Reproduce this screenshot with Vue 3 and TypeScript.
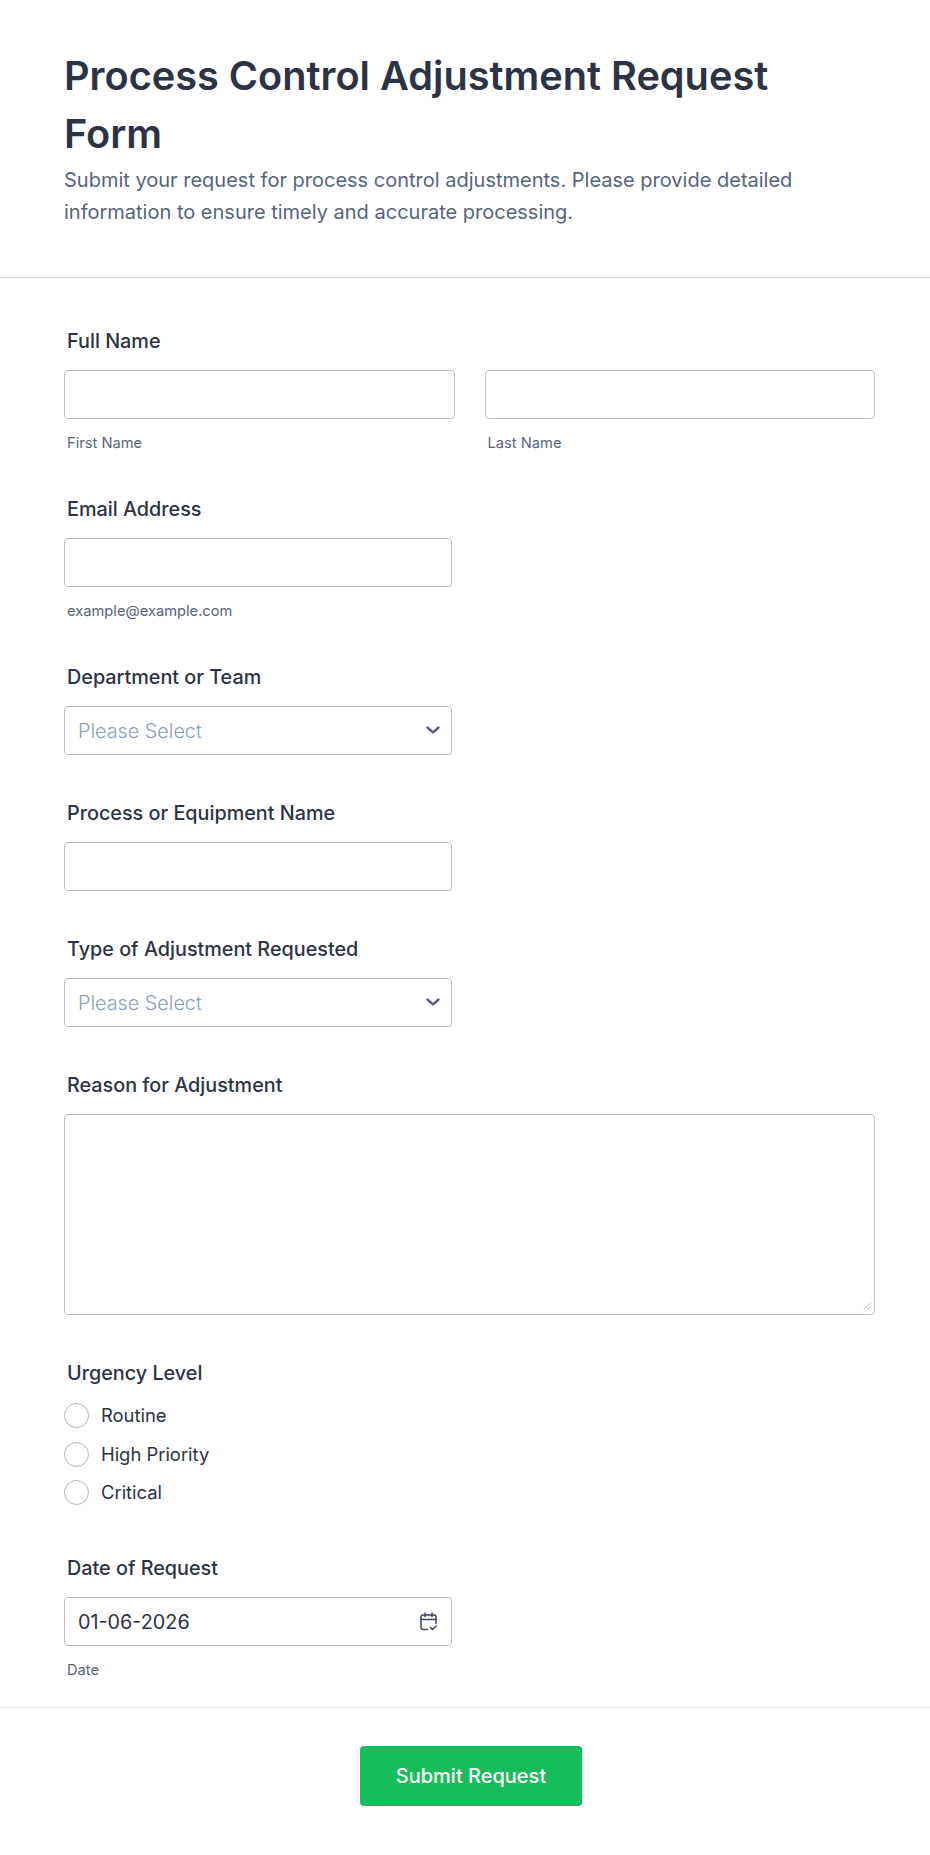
<template>
  <div class="page">
    <header class="form-header">
      <h1>Process Control Adjustment Request Form</h1>
      <p>Submit your request for process control adjustments. Please provide detailed information to ensure timely and accurate processing.</p>
    </header>

    <form class="form-body" @submit.prevent>
      <div class="field">
        <label class="field-label">Full Name</label>
        <div class="name-row">
          <div class="name-col">
            <input v-model="firstName" class="control" type="text" />
            <span class="sublabel">First Name</span>
          </div>
          <div class="name-col">
            <input v-model="lastName" class="control" type="text" />
            <span class="sublabel">Last Name</span>
          </div>
        </div>
      </div>

      <div class="field narrow">
        <label class="field-label">Email Address</label>
        <input v-model="email" class="control" type="email" />
        <span class="sublabel">example@example.com</span>
      </div>

      <div class="field narrow">
        <label class="field-label">Department or Team</label>
        <div class="select-wrap">
          <select v-model="department" class="control select">
            <option value="">Please Select</option>
          </select>
          <svg class="chevron" viewBox="0 0 14 8" fill="none">
            <path d="M1.500 1.500L7 6.300l5.500-4.800" stroke="#556079" stroke-width="2.400" stroke-linecap="round" stroke-linejoin="round" />
          </svg>
        </div>
      </div>

      <div class="field narrow">
        <label class="field-label">Process or Equipment Name</label>
        <input v-model="processName" class="control" type="text" />
      </div>

      <div class="field narrow">
        <label class="field-label">Type of Adjustment Requested</label>
        <div class="select-wrap">
          <select v-model="adjustment" class="control select">
            <option value="">Please Select</option>
          </select>
          <svg class="chevron" viewBox="0 0 14 8" fill="none">
            <path d="M1.500 1.500L7 6.300l5.500-4.800" stroke="#556079" stroke-width="2.400" stroke-linecap="round" stroke-linejoin="round" />
          </svg>
        </div>
      </div>

      <div class="field">
        <label class="field-label">Reason for Adjustment</label>
        <div class="select-wrap">
          <textarea v-model="reason" class="control textarea"></textarea>
          <svg class="grip" viewBox="0 0 8 8" fill="none" stroke="#b4b9c4" stroke-width="1">
            <path d="M1 7.500L7.500 1M4.500 7.500L7.500 4.500" />
          </svg>
        </div>
      </div>

      <div class="field">
        <label class="field-label">Urgency Level</label>
        <div class="radios">
          <label v-for="level in levels" :key="level" class="radio">
            <input v-model="urgency" type="radio" name="urgency" :value="level" />
            <span>{{ level }}</span>
          </label>
        </div>
      </div>

      <div class="field narrow">
        <label class="field-label">Date of Request</label>
        <div class="select-wrap">
          <input v-model="requestDate" class="control date" type="text" />
          <svg class="calendar" viewBox="0 0 17 19" fill="none" stroke="#3d4660" stroke-width="1.500" stroke-linecap="round" stroke-linejoin="round">
            <path d="M7.500 17.500H3A2 2 0 0 1 1 15.500V5A2 2 0 0 1 3 3h11a2 2 0 0 1 2 2v6.500" />
            <path d="M1 7.500h15M5 1v3.500M12 1v3.500" />
            <path d="M10.500 15.500l2 2 3.500-3.500" />
          </svg>
        </div>
        <span class="sublabel">Date</span>
      </div>
    </form>

    <footer class="form-footer">
      <button class="submit" type="button">Submit Request</button>
    </footer>
  </div>
</template>

<script setup lang="ts">
import { ref } from 'vue';

const levels = ['Routine', 'High Priority', 'Critical'];

const firstName = ref('');
const lastName = ref('');
const email = ref('');
const department = ref('');
const processName = ref('');
const adjustment = ref('');
const reason = ref('');
const urgency = ref('');
const requestDate = ref('01-06-2026');
</script>

<style>
html, body { background: #fff; }
</style>

<style scoped>
.page {
  width: 930px;
  font-family: Inter, "Noto Sans", sans-serif;
  color: #2c3345;
  background: #fff;
}
.form-header {
  padding: 47px 64px 49px;
  border-bottom: 1px solid #d8dae9;
}
.form-header h1 {
  margin: 0;
  font-size: 39.700px;
  line-height: 58px;
  font-weight: 600;
  color: #2c3345;
}
.form-header p {
  margin: 1px 0 0;
  font-size: 20px;
  line-height: 32px;
  color: #57647e;
}
.form-body {
  padding: 50px 55px 29px 64px;
  display: flex;
  flex-direction: column;
  gap: 45px;
}
.field { display: flex; flex-direction: column; }
.narrow { width: 388px; }
.field-label {
  font-size: 19.800px;
  line-height: 26px;
  font-weight: 450;
  color: #2c3345;
  margin: 0 0 16px 3px;
}
.name-row { display: flex; gap: 30px; }
.name-col { flex: 1; display: flex; flex-direction: column; }
.control {
  display: block;
  box-sizing: border-box;
  width: 100%;
  height: 49px;
  padding: 0 13px;
  border: 1px solid #b8bdc9;
  border-radius: 4px;
  background: #fff;
  font-family: inherit;
  font-size: 19.800px;
  color: #2c3345;
  outline: none;
}
.sublabel {
  margin: 16px 0 0 3px;
  font-size: 14.700px;
  line-height: 16px;
  color: #57647e;
}
.select-wrap { position: relative; }
.select {
  appearance: none;
  color: #8ca1b8;
  font-weight: 300;
}
.chevron {
  position: absolute;
  right: 12px;
  top: 20px;
  width: 14px;
  height: 8px;
  pointer-events: none;
}
.textarea { height: 201px; padding: 10px 13px; resize: none; }
.grip {
  position: absolute;
  right: 4px;
  bottom: 5px;
  width: 8px;
  height: 8px;
  pointer-events: none;
}
.radios {
  display: flex;
  flex-direction: column;
  gap: 13.500px;
  margin: 1px 0 5px;
}
.radio {
  display: flex;
  align-items: center;
  gap: 12px;
  font-size: 18.400px;
  line-height: 25px;
  color: #2c3345;
}
.radio input {
  appearance: none;
  box-sizing: border-box;
  flex: none;
  width: 25px;
  height: 25px;
  margin: 0;
  border: 1px solid #aeb4c4;
  border-radius: 50%;
  background: #fff;
}
.date { padding-right: 40px; }
.calendar {
  position: absolute;
  right: 15px;
  top: 15px;
  width: 17px;
  height: 19px;
  pointer-events: none;
}
.form-footer {
  border-top: 1px solid #e3e5f0;
  padding: 38px 0 49px 12px;
  display: flex;
  justify-content: center;
}
.submit {
  width: 222px;
  height: 60px;
  border: none;
  border-radius: 4px;
  background: #18bd5b;
  color: #fff;
  font-family: inherit;
  font-size: 20px;
  font-weight: 450;
}
</style>
